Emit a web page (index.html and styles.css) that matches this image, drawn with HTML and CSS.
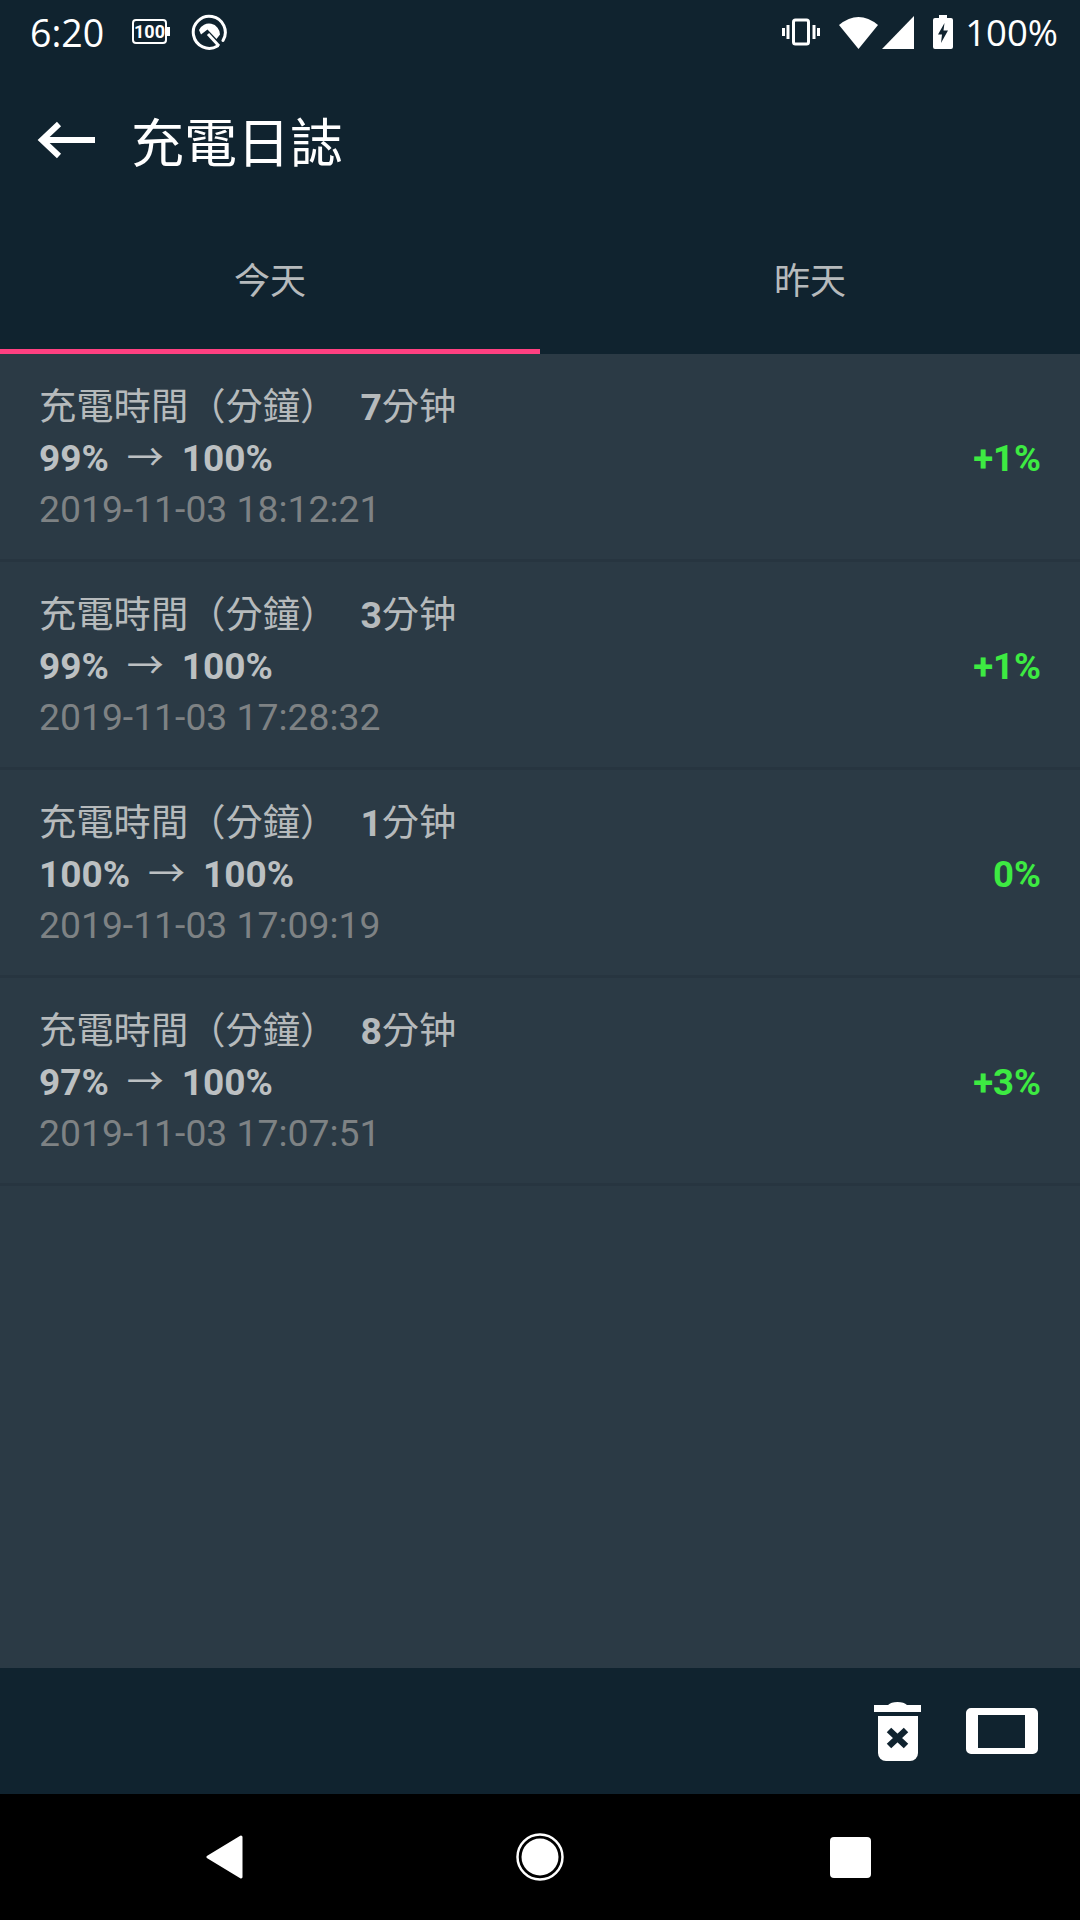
FILE: index.html
```html
<!DOCTYPE html>
<html lang="zh-Hant">
<head>
  <meta charset="UTF-8">
  <title>充電日誌</title>
  <link rel="stylesheet" href="styles.css">
</head>
<body>
  <div class="phone">
    <div class="statusbar">
      <div class="status-left">
        <span class="clock">6:20</span>
        <svg class="ic-batt" viewBox="0 0 38 26" width="38" height="26">
          <rect x="1" y="1" width="33" height="23" rx="3" fill="none" stroke="#fff" stroke-width="2"/>
          <rect x="34" y="8" width="4" height="9" fill="#fff"/>
          <text x="17.500" y="19" class="batt-num">100</text>
        </svg>
        <svg viewBox="0 0 36 36" width="36" height="36">
          <path d="M26.500 32A16 16 0 1 1 32 26.500" fill="none" stroke="#fff" stroke-width="3" stroke-linecap="round"/>
          <path d="M8 16A11 11 0 0 1 29 20.500L25.500 25L16.500 15.500L10 20.500z" fill="#fff"/>
          <path d="M17 20L28 32" stroke="#fff" stroke-width="3" fill="none"/>
        </svg>
      </div>
      <div class="status-right">
        <svg viewBox="0 0 38 28" width="38" height="28">
          <rect x="11.500" y="2" width="15" height="24" rx="2" fill="none" stroke="#fff" stroke-width="3"/>
          <path d="M6 7v14M1.500 10v8M32 7v14M36.500 10v8" stroke="#fff" stroke-width="3" fill="none"/>
        </svg>
        <svg class="ic-wifi" viewBox="0 0 39 33" width="39" height="33">
          <path d="M19.500 33L0 9Q19.500 -7 39 9z" fill="#fff"/>
        </svg>
        <svg class="ic-signal" viewBox="0 0 32 33" width="32" height="33">
          <path d="M32 0V33H0z" fill="#fff"/>
        </svg>
        <svg class="ic-charge" viewBox="0 0 20 34" width="20" height="34">
          <path d="M6 0h8v3h4a2 2 0 0 1 2 2v27a2 2 0 0 1-2 2H2a2 2 0 0 1-2-2V5a2 2 0 0 1 2-2h4z" fill="#fff"/>
          <path d="M11.500 8L5 19.500h4L8 28l7-12.500h-4.500z" fill="#10232f"/>
        </svg>
        <span class="pct">100%</span>
      </div>
    </div>

    <div class="toolbar">
      <svg class="back" viewBox="0 0 59 40" width="59" height="40">
        <path d="M59 20H6M23 4L6 20l17 16" fill="none" stroke="#fff" stroke-width="6"/>
      </svg>
      <h1>充電日誌</h1>
    </div>

    <div class="tabs">
      <div class="tab active">今天</div>
      <div class="tab">昨天</div>
    </div>

    <div class="list">
      <div class="row">
        <div class="info">
          <div class="line">充電時間（分鐘）<b class="mins">7</b>分钟</div>
          <div class="line levels">99%<span class="arrow">→</span>100%</div>
          <div class="line stamp">2019-11-03 18:12:21</div>
        </div>
        <div class="delta">+1%</div>
      </div>
      <div class="row">
        <div class="info">
          <div class="line">充電時間（分鐘）<b class="mins">3</b>分钟</div>
          <div class="line levels">99%<span class="arrow">→</span>100%</div>
          <div class="line stamp">2019-11-03 17:28:32</div>
        </div>
        <div class="delta">+1%</div>
      </div>
      <div class="row">
        <div class="info">
          <div class="line">充電時間（分鐘）<b class="mins">1</b>分钟</div>
          <div class="line levels">100%<span class="arrow">→</span>100%</div>
          <div class="line stamp">2019-11-03 17:09:19</div>
        </div>
        <div class="delta">0%</div>
      </div>
      <div class="row">
        <div class="info">
          <div class="line">充電時間（分鐘）<b class="mins">8</b>分钟</div>
          <div class="line levels">97%<span class="arrow">→</span>100%</div>
          <div class="line stamp">2019-11-03 17:07:51</div>
        </div>
        <div class="delta">+3%</div>
      </div>
    </div>

    <div class="actions">
      <svg viewBox="0 0 47 59" width="47" height="59">
        <path d="M0 3H14Q17 0 23.500 0T33 3H47V10H0z" fill="#fff"/>
        <path d="M4 14H44V51a8 8 0 0 1-8 8H12a8 8 0 0 1-8-8z" fill="#fff"/>
        <path d="M15 28L32 44M32 28L15 44" stroke="#10232f" stroke-width="6.500" fill="none"/>
      </svg>
      <svg viewBox="0 0 74 48" width="74" height="48">
        <path fill-rule="evenodd" d="M6 1H68a5 5 0 0 1 5 5V42a5 5 0 0 1-5 5H6a5 5 0 0 1-5-5V6a5 5 0 0 1 5-5zM13 8V41H60V8z" fill="#fff"/>
      </svg>
    </div>

    <div class="navbar">
      <svg class="nav-back" viewBox="0 0 38 44" width="38" height="44">
        <path d="M35 2L2 22L35 42z" fill="#fff" stroke="#fff" stroke-width="3" stroke-linejoin="round"/>
      </svg>
      <svg viewBox="0 0 48 48" width="48" height="48">
        <circle cx="24" cy="24" r="22.500" fill="none" stroke="#fff" stroke-width="2.500"/>
        <circle cx="24" cy="24" r="18.500" fill="#fff"/>
      </svg>
      <div class="nav-square"></div>
    </div>
  </div>
</body>
</html>
```

FILE: styles.css
```css
* { margin:0; padding:0; box-sizing:border-box }
body { background:#000; font-family:'Roboto','Noto Sans CJK TC',sans-serif; }
.phone { width:1080px; height:1920px; display:flex; flex-direction:column; background:#2b3a45; }

.statusbar {
  height:64px; background:#10232f; color:#fff;
  display:flex; justify-content:space-between; align-items:center;
  padding:0 22px 0 30px;
}
.status-left, .status-right { display:flex; align-items:center; }
.clock { font-family:'Open Sans',sans-serif; font-size:37.500px; margin-right:28px; }
.ic-batt { margin-right:21px; }
.batt-num { font-family:'Roboto',sans-serif; font-weight:700; font-size:18px; fill:#fff; text-anchor:middle; }
.ic-wifi { margin-left:19px; }
.ic-signal { margin-left:4px; }
.ic-charge { margin-left:19px; }
.pct { font-family:'Open Sans',sans-serif; font-size:36.500px; margin-left:12px; }

.toolbar {
  height:156px; background:#10232f; color:#fff;
  display:flex; align-items:center; padding:0 0 5px 36px;
}
.back { margin-right:36px; }
.toolbar h1 { font-size:53px; font-weight:400; }

.tabs { height:134px; background:#10232f; display:flex; }
.tab {
  flex:1; display:flex; align-items:center; justify-content:center;
  color:#b6babc; font-size:36px; padding-bottom:13px;
  border-bottom:5px solid transparent;
}
.tab.active { border-bottom-color:#ff4081; }

.list { flex:1; }
.row {
  height:208px; display:flex; align-items:center; justify-content:space-between;
  padding:3px 39px 0; border-bottom:3px solid #273540;
}
.line { font-size:37.300px; line-height:51px; color:#b6babc; }
.mins { margin-left:23px; }
.levels { font-size:37px; font-weight:700; color:#bcc0c2; }
.arrow { font-weight:400; margin:0 18px; }
.stamp { color:#7e8284; }
.delta { font-size:36.500px; font-weight:700; color:#3dea42; }

.actions {
  height:126px; background:#10232f;
  display:flex; justify-content:flex-end; align-items:center; gap:44px;
  padding:0 41px 0 0;
}

.navbar {
  height:126px; background:#000;
  display:grid; grid-template-columns:1fr auto 1fr; align-items:center;
  padding:0 209px;
}
.nav-back { margin-left:-3px; }
.nav-square { width:41px; height:41px; background:#fff; border-radius:4px; justify-self:end; }
```
